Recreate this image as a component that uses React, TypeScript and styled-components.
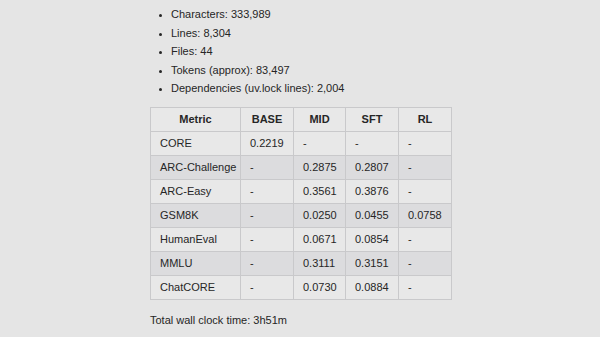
import styled, { createGlobalStyle } from "styled-components";

const GlobalStyle = createGlobalStyle`
  html, body {
    margin: 0;
    padding: 0;
    background: #e5e5e5;
  }
  body {
    font-family: "Liberation Sans", Arial, sans-serif;
    color: #262626;
  }
`;

const Page = styled.div`
  width: 300px;
  margin: 0 auto;
  padding-top: 5px;
  font-size: 11px;
`;

const Stats = styled.ul`
  margin: 0;
  padding-left: 21px;
  list-style: disc;
`;

const StatItem = styled.li`
  line-height: 18.5px;
  &::marker {
    font-size: 9px;
  }
`;

const Table = styled.table`
  margin-top: 9px;
  width: 301px;
  border-collapse: collapse;
  table-layout: fixed;
`;

const Row = styled.tr<{ $shaded?: boolean }>`
  background: ${(p) => (p.$shaded ? "#dcdcde" : "#e8e8e8")};
`;

const HeadCell = styled.th<{ $w: number }>`
  box-sizing: border-box;
  width: ${(p) => p.$w}px;
  height: 24px;
  padding: 0 9px;
  border: 1px solid #c9c9cb;
  font-weight: bold;
  text-align: center;
`;

const Cell = styled.td`
  box-sizing: border-box;
  height: 24px;
  padding: 0 9px;
  border: 1px solid #c9c9cb;
  white-space: nowrap;
`;

const Footer = styled.p`
  margin: 13px 0 0;
  line-height: 14px;
`;

const stats = [
  "Characters: 333,989",
  "Lines: 8,304",
  "Files: 44",
  "Tokens (approx): 83,497",
  "Dependencies (uv.lock lines): 2,004",
];

const columns: [string, number][] = [
  ["Metric", 90],
  ["BASE", 53],
  ["MID", 52],
  ["SFT", 53],
  ["RL", 53],
];

const rows: string[][] = [
  ["CORE", "0.2219", "-", "-", "-"],
  ["ARC-Challenge", "-", "0.2875", "0.2807", "-"],
  ["ARC-Easy", "-", "0.3561", "0.3876", "-"],
  ["GSM8K", "-", "0.0250", "0.0455", "0.0758"],
  ["HumanEval", "-", "0.0671", "0.0854", "-"],
  ["MMLU", "-", "0.3111", "0.3151", "-"],
  ["ChatCORE", "-", "0.0730", "0.0884", "-"],
];

const App = () => {
  return (
    <>
      <GlobalStyle />
      <Page>
        <Stats>
          {stats.map((s) => (
            <StatItem key={s}>{s}</StatItem>
          ))}
        </Stats>
        <Table>
          <thead>
            <Row>
              {columns.map(([name, w]) => (
                <HeadCell key={name} $w={w}>
                  {name}
                </HeadCell>
              ))}
            </Row>
          </thead>
          <tbody>
            {rows.map((r, i) => (
              <Row key={r[0]} $shaded={i % 2 === 1}>
                {r.map((v, j) => (
                  <Cell key={j}>{v}</Cell>
                ))}
              </Row>
            ))}
          </tbody>
        </Table>
        <Footer>Total wall clock time: 3h51m</Footer>
      </Page>
    </>
  );
};

export default App;
